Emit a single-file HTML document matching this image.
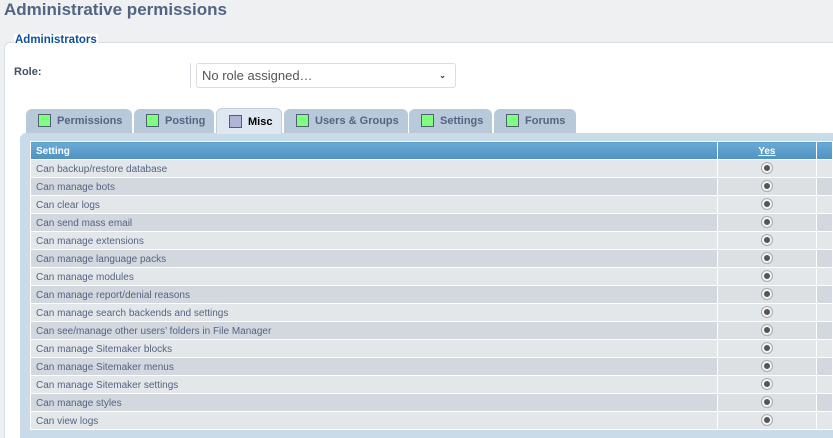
<!DOCTYPE html>
<html><head><meta charset="utf-8"><style>
html,body{margin:0;width:833px;height:438px;overflow:hidden}
body{background:#eef0f2;font-family:"Liberation Sans",Verdana,sans-serif;position:relative}
h1{position:absolute;left:4px;top:0;margin:0;font-size:17px;font-weight:bold;color:#536482;line-height:20px}
.fs{position:absolute;left:4px;top:42px;width:840px;height:410px;background:#fff;border:1px solid #d7dde3;border-radius:6px}
.legend{position:absolute;left:14px;top:34px;font-size:11.5px;font-weight:bold;color:#115098;background:#fff;padding:0 1px}
.role{position:absolute;left:14px;top:66px;font-size:11px;font-weight:bold;color:#425067}
.sep{position:absolute;left:190px;top:63px;width:1px;height:25px;background:#d7dde3}
.sel{position:absolute;left:196px;top:63px;width:258px;height:23px;border:1px solid #d7dde3;border-radius:3px;background:#fff;font-size:13px;color:#555;line-height:23px;text-indent:5px}
.sel b{position:absolute;right:9px;top:0;font-size:8px;color:#333}
.tab{position:absolute;top:109px;height:24px;background:#b8c9d9;border-radius:6px 6px 0 0;font-size:11px;font-weight:bold;color:#536482;line-height:25px;box-sizing:border-box;padding-left:12px}
.tab i{display:inline-block;width:11px;height:11px;background:#7fff7f;border:1px solid #506070;vertical-align:-3px;margin-right:6px}
.tab.on{background:#dfe8f1;color:#000;top:108px;height:26px;border:1px solid #c0d0e0;border-bottom:none;line-height:26px}
.tab.on i{background:#b0b5d8}
.box{position:absolute;left:20px;top:133px;width:830px;height:310px;background:#c9dbe9;border-radius:6px 0 0 0}
table{position:absolute;left:30px;top:141px;border-collapse:collapse;background:#fff;border:1px solid #fff}
td,th{border:1px solid #fff;padding:2px 0 0 5px;height:15px;font-size:10px;color:#536482;text-align:left;vertical-align:middle;box-sizing:content-box}
th{background:linear-gradient(#6aaad6,#4f91c0);color:#fff;font-size:10px;height:15px}
th.y{text-align:center;text-decoration:underline;padding:2px 0 0 0}
tr:nth-child(odd) td{background:#d3d8df}
tr:nth-child(even) td{background:#e4e7ea}
tr:nth-child(odd) td.r{background:#dde0e3}
td.r{text-align:center;padding:0}
.rd{display:inline-block;width:6px;height:6px;border-radius:50%;background:#555;border:2px solid #f4f4f4;box-shadow:0 0 0 1px #aaa;vertical-align:middle}
</style></head><body>
<h1>Administrative permissions</h1>
<div class="fs"></div>
<div class="legend">Administrators</div>
<div class="role">Role:</div>
<div class="sep"></div>
<div class="sel">No role assigned…<b>⌄</b></div>
<div class="box"></div>
<div class="tab" style="left:26px;width:106px"><i></i>Permissions</div>
<div class="tab" style="left:134px;width:80px"><i></i>Posting</div>
<div class="tab on" style="left:216px;width:66px"><i></i>Misc</div>
<div class="tab" style="left:284px;width:124px"><i></i>Users &amp; Groups</div>
<div class="tab" style="left:409px;width:83px"><i></i>Settings</div>
<div class="tab" style="left:494px;width:82px"><i></i>Forums</div>
<table>
<tr><th style="width:691px">Setting</th><th class="y" style="width:100px">Yes</th><th style="width:10px"></th></tr>
<tr><td>Can backup/restore database</td><td class="r"><span class="rd"></span></td><td></td></tr>
<tr><td>Can manage bots</td><td class="r"><span class="rd"></span></td><td></td></tr>
<tr><td>Can clear logs</td><td class="r"><span class="rd"></span></td><td></td></tr>
<tr><td>Can send mass email</td><td class="r"><span class="rd"></span></td><td></td></tr>
<tr><td>Can manage extensions</td><td class="r"><span class="rd"></span></td><td></td></tr>
<tr><td>Can manage language packs</td><td class="r"><span class="rd"></span></td><td></td></tr>
<tr><td>Can manage modules</td><td class="r"><span class="rd"></span></td><td></td></tr>
<tr><td>Can manage report/denial reasons</td><td class="r"><span class="rd"></span></td><td></td></tr>
<tr><td>Can manage search backends and settings</td><td class="r"><span class="rd"></span></td><td></td></tr>
<tr><td>Can see/manage other users’ folders in File Manager</td><td class="r"><span class="rd"></span></td><td></td></tr>
<tr><td>Can manage Sitemaker blocks</td><td class="r"><span class="rd"></span></td><td></td></tr>
<tr><td>Can manage Sitemaker menus</td><td class="r"><span class="rd"></span></td><td></td></tr>
<tr><td>Can manage Sitemaker settings</td><td class="r"><span class="rd"></span></td><td></td></tr>
<tr><td>Can manage styles</td><td class="r"><span class="rd"></span></td><td></td></tr>
<tr><td>Can view logs</td><td class="r"><span class="rd"></span></td><td></td></tr>
</table>
</body></html>
